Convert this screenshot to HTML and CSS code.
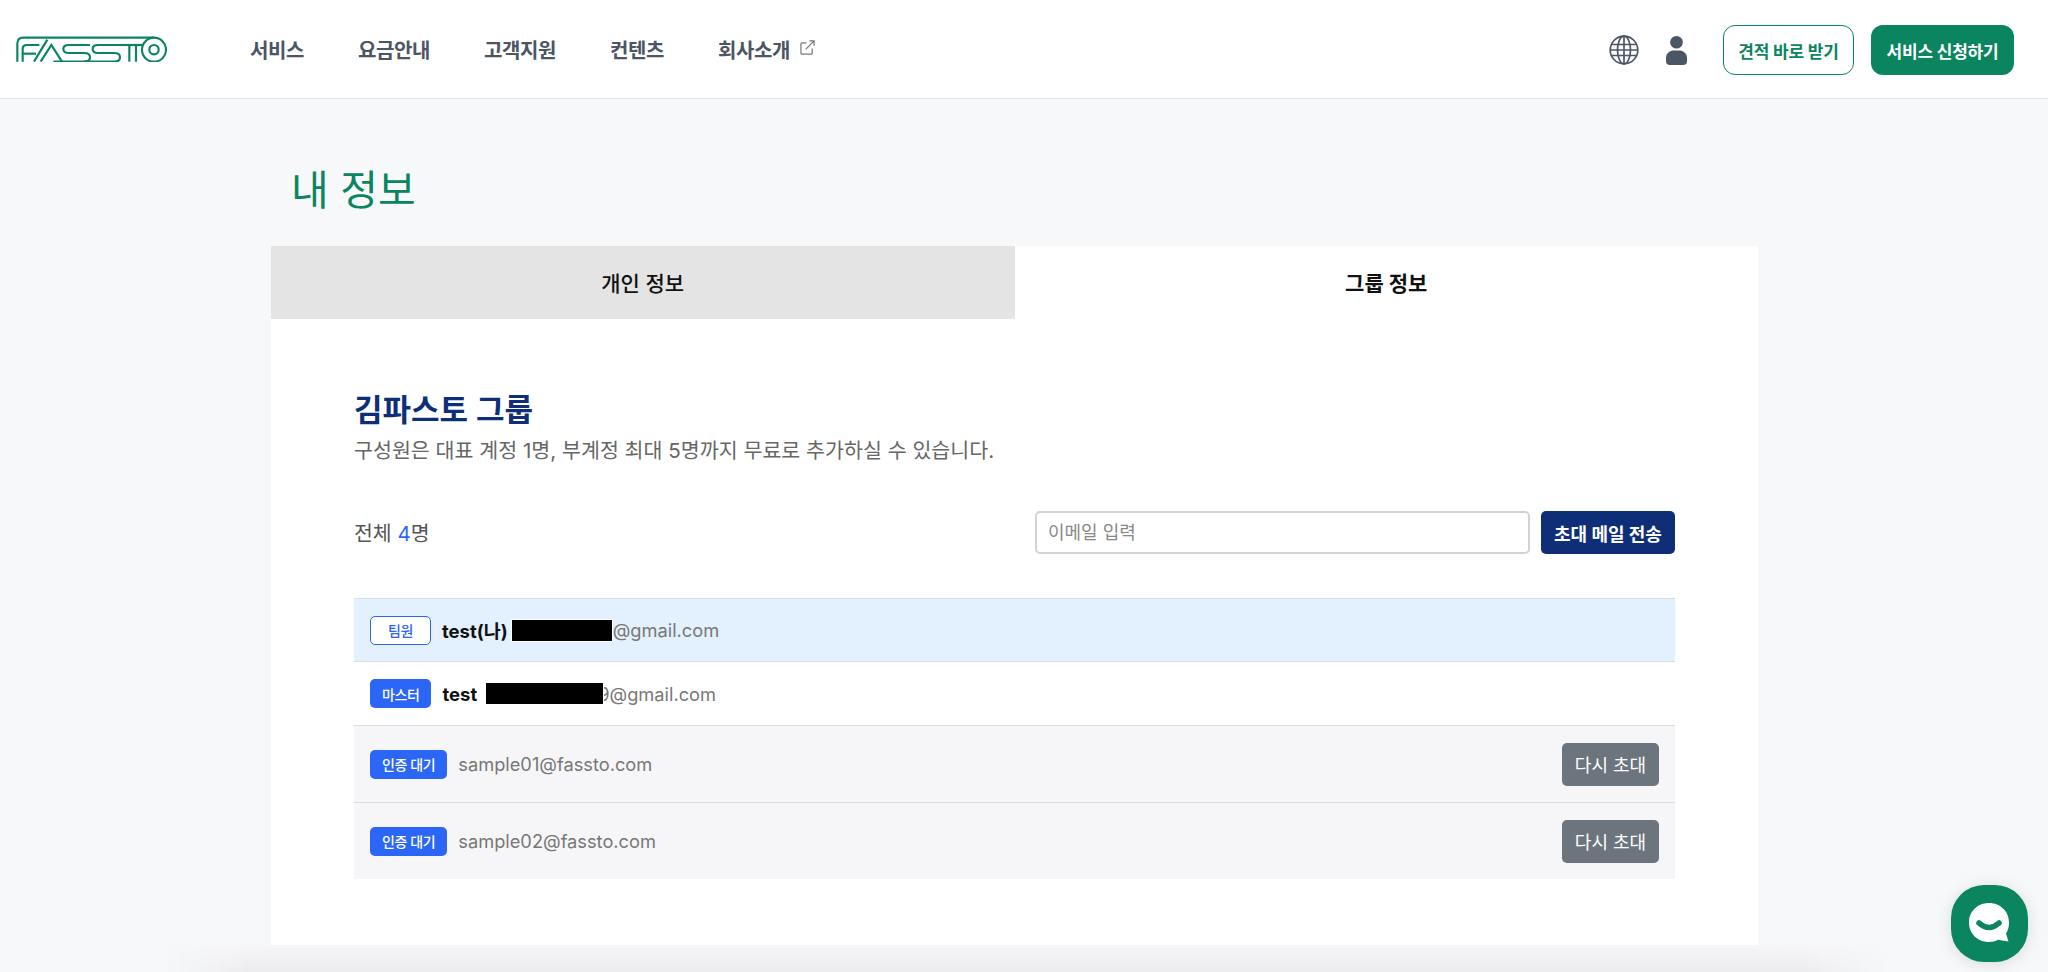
FILE: index.html
```html
<!DOCTYPE html>
<html lang="ko">
<head>
<meta charset="UTF-8">
<meta name="viewport" content="width=device-width, initial-scale=1.0">
<title>FASSTO - 내 정보</title>
<link rel="stylesheet" href="styles.css">
</head>
<body>

<header class="topbar">
  <a href="#" class="logo" aria-label="FASSTO">
    <svg width="151" height="26" viewBox="18 15 453 78" fill="none" stroke="#0a8560" stroke-width="6.500">
      <path d="M22 92V38Q22 20 40 20H432"/>
      <path d="M38 92V54Q38 42 50 42H88"/>
      <path d="M38 68H78"/>
      <path d="M72 92L112 26"/>
      <path d="M92 92L124 42L156 92"/>
      <path d="M130 92H222Q240 92 240 79Q240 66 222 66H176Q160 66 160 54Q160 42 176 42H240"/>
      <path d="M222 92H312Q330 92 330 79Q330 66 312 66H264Q248 66 248 54Q248 42 264 42H340"/>
      <path d="M330 42H396"/>
      <path d="M358 42V92"/>
      <path d="M378 42V92"/>
      <circle cx="432" cy="56" r="36"/>
      <circle cx="432" cy="56" r="14"/>
    </svg>
  </a>
  <nav class="menu">
    <a href="#">서비스</a>
    <a href="#">요금안내</a>
    <a href="#">고객지원</a>
    <a href="#">컨텐츠</a>
    <a href="#" class="menu-ext">회사소개
      <svg width="15" height="15" viewBox="0 0 16 16" fill="none" stroke="#777" stroke-width="1.300">
        <path d="M7 3H2Q1 3 1 4V14Q1 15 2 15H12Q13 15 13 14V9"/>
        <path d="M6 10L15 1M10 1H15V6"/>
      </svg>
    </a>
  </nav>
  <div class="top-actions">
    <svg class="globe" width="30" height="30" viewBox="0 0 30 30" fill="none" stroke="#4b5563" stroke-width="1.700">
      <circle cx="15" cy="15" r="13.800"/>
      <ellipse cx="15" cy="15" rx="6.500" ry="13.800"/>
      <path d="M15 1V29M2.500 9.500H27.500M1.200 15H28.800M2.500 20.500H27.500"/>
    </svg>
    <svg class="person" width="21" height="29" viewBox="0 0 21 29" fill="#4b5563">
      <circle cx="10.500" cy="6.300" r="6.300"/>
      <path d="M0 25V22C0 17 4 14.500 8 14.500H13C17 14.500 21 17 21 22V25Q21 29 17 29H4Q0 29 0 25Z"/>
    </svg>
    <a href="#" class="btn-outline">견적 바로 받기</a>
    <a href="#" class="btn-green">서비스 신청하기</a>
  </div>
</header>

<main class="page">
  <h1 class="page-title">내 정보</h1>

  <section class="card">
    <div class="tabs">
      <a href="#" class="tab">개인 정보</a>
      <a href="#" class="tab active">그룹 정보</a>
    </div>

    <div class="panel">
      <h2 class="group-name">김파스토 그룹</h2>
      <p class="group-desc">구성원은 대표 계정 1명, 부계정 최대 5명까지 무료로 추가하실 수 있습니다.</p>

      <div class="toolbar">
        <div class="total">전체 <b>4</b>명</div>
        <form class="invite">
          <input type="text" placeholder="이메일 입력">
          <button type="button">초대 메일 전송</button>
        </form>
      </div>

      <ul class="members">
        <li class="member me">
          <span class="badge badge-line">팀원</span>
          <strong>test(나)</strong>
          <span class="mask mask-me"></span>
          <span class="mail">@gmail.com</span>
        </li>
        <li class="member">
          <span class="badge">마스터</span>
          <strong>test</strong>
          <span class="mask mask-master"></span>
          <span class="mail">9@gmail.com</span>
        </li>
        <li class="member waiting">
          <span class="badge">인증 대기</span>
          <span class="mail">sample01@fassto.com</span>
          <button type="button" class="resend">다시 초대</button>
        </li>
        <li class="member waiting">
          <span class="badge">인증 대기</span>
          <span class="mail">sample02@fassto.com</span>
          <button type="button" class="resend">다시 초대</button>
        </li>
      </ul>
    </div>
  </section>

  <div class="fold-shade"></div>
</main>

<a href="#" class="chat" aria-label="채팅 상담">
  <svg width="46" height="46" viewBox="0 0 46 46">
    <path fill="#fff" d="M22 2C33.500 2 42 10.500 42 21.500C42 26 41 29.500 39 32.500L41.500 40.500L31 38.800C28.500 40.200 25.500 41 22 41C10.500 41 2 32.500 2 21.500C2 10.500 10.500 2 22 2Z"/>
    <path fill="none" stroke="#0a8560" stroke-width="5.500" stroke-linecap="round" d="M12 22Q22 31 32 22"/>
  </svg>
</a>

</body>
</html>
```

FILE: styles.css
```css
* {
  box-sizing: border-box;
}

html, body {
  height: 100%;
  margin: 0;
  overflow: hidden;
}

body {
  background-color: #f7f8fa;
  color: #111;
  font-family: Inter, 'Noto Sans CJK KR', sans-serif;
}

a {
  color: inherit;
  text-decoration: none;
}

/* header */
.topbar {
  display: flex;
  align-items: center;
  height: 99px;
  padding: 0 34px 0 16px;
  background-color: white;
  border-bottom: 1px solid #e2e3e6;
}

.logo {
  display: flex;
  margin-right: 83px;
}

.menu {
  display: flex;
  align-items: center;
  gap: 54px;
  font-size: 20px;
  font-weight: 600;
  letter-spacing: -0.4px;
  color: #4b5563;
}

.menu-ext {
  display: flex;
  align-items: center;
  gap: 10px;
}

.menu-ext svg {
  margin-top: -3px;
}

.top-actions {
  display: flex;
  align-items: center;
  margin-top: 2px;
  margin-left: auto;
}

.person {
  margin-left: 27px;
  margin-right: 36px;
}

.btn-outline,
.btn-green {
  display: flex;
  align-items: center;
  justify-content: center;
  height: 50px;
  border-radius: 12px;
  font-size: 17px;
  font-weight: 700;
  letter-spacing: -0.2px;
}

.btn-outline {
  width: 131px;
  margin-right: 17px;
  background-color: white;
  color: #0a8560;
  border: 1.5px solid #0a8560;
}

.btn-green {
  width: 143px;
  background-color: #0a8560;
  color: white;
}

/* page */
.page {
  width: 1487px;
  margin-left: 271px;
}

.page-title {
  margin: 61px 0 26px 20px;
  font-size: 41px;
  line-height: 60px;
  font-weight: 400;
  color: #0a8560;
}

.card {
  background-color: white;
}

.tabs {
  display: flex;
}

.tab {
  flex: 1;
  display: flex;
  align-items: center;
  justify-content: center;
  height: 73px;
  padding-bottom: 2px;
  background-color: #e4e4e4;
  font-size: 21px;
  font-weight: 500;
}

.tab.active {
  background-color: white;
  font-weight: 700;
}

.panel {
  padding: 71px 83px 66px;
}

.group-name {
  margin: 0;
  font-size: 31px;
  line-height: 40px;
  font-weight: 600;
  color: #0e2f78;
}

.group-desc {
  margin: 6px 0 0;
  font-size: 20.6px;
  line-height: 30px;
  color: #666;
}

.toolbar {
  display: flex;
  align-items: center;
  justify-content: space-between;
  margin-top: 45px;
}

.total {
  padding-bottom: 2px;
  font-size: 20.5px;
  color: #555;
}

.total b {
  font-weight: 400;
  color: #2b66f6;
}

.invite {
  display: flex;
  gap: 11px;
}

.invite input {
  width: 495px;
  height: 43px;
  padding: 0 11px;
  border: 2px solid #d2d3d5;
  border-radius: 5px;
  font-family: inherit;
  font-size: 18px;
}

.invite input::placeholder {
  color: #888;
}

.invite button {
  width: 134px;
  height: 43px;
  padding: 0;
  border: none;
  border-radius: 5px;
  background-color: #0e2f78;
  color: white;
  font-family: inherit;
  font-size: 18px;
  font-weight: 700;
}

/* member list */
.members {
  margin: 44px 0 0;
  padding: 0;
  list-style: none;
}

.member {
  display: flex;
  align-items: center;
  height: 63px;
  padding: 0 16px;
  font-size: 18.25px;
}

.member.me {
  height: 64px;
  background-color: #e3f0fd;
  border-top: 1px solid #d9dce0;
  border-bottom: 1px solid #d9dce0;
}

.member.waiting {
  height: 77px;
  background-color: #f6f6f8;
  border-top: 1px solid #dcdcde;
}

.badge {
  display: flex;
  align-items: center;
  height: 29px;
  margin-right: 11px;
  padding: 0 12px;
  border-radius: 5px;
  background-color: #2b66f6;
  color: white;
  font-size: 14px;
  font-weight: 500;
  letter-spacing: -0.4px;
}

.badge-line {
  padding: 0 17px;
  background-color: white;
  color: #2b66f6;
  border: 1.5px solid #2b66f6;
}

.member strong {
  font-size: 18.5px;
  font-weight: 700;
  color: #111;
}

.mask {
  position: relative;
  background-color: black;
  box-shadow: 0 0 0 1px white;
}

.mask-me {
  width: 100px;
  height: 21px;
  margin: 0 1px 0 4px;
}

.mask-master {
  width: 117px;
  height: 21px;
  margin: 0 -5px 0 9px;
}

.mail {
  color: #777;
}

.resend {
  width: 97px;
  height: 43px;
  margin-left: auto;
  padding: 0;
  border: none;
  border-radius: 5px;
  background-color: #6c757d;
  color: white;
  font-family: inherit;
  font-size: 18px;
}

/* soft shade of the section under the fold, ends at the window edge */
.fold-shade {
  width: 1720px;
  height: 27px;
  margin-left: -106px;
  background: linear-gradient(to bottom, #f6f6f8, #ececee);
  -webkit-mask-image: linear-gradient(to right, transparent, black 80px, black calc(100% - 80px), transparent);
  mask-image: linear-gradient(to right, transparent, black 80px, black calc(100% - 80px), transparent);
}

.chat {
  position: fixed;
  right: 20px;
  bottom: 10px;
  z-index: 2;
  display: flex;
  align-items: center;
  justify-content: center;
  width: 77px;
  height: 77px;
  border-radius: 33px;
  background-color: #0a8560;
  box-shadow: 0 2px 16px rgba(0, 0, 0, 0.12);
}
```
